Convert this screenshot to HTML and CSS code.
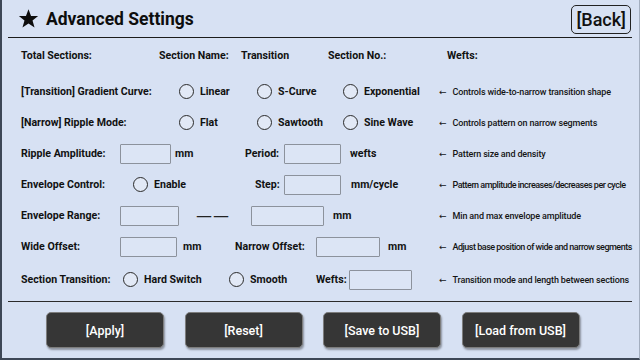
FILE: index.html
```html
<!DOCTYPE html>
<html lang="en">

<head>
  <meta charset="UTF-8">
  <meta name="viewport" content="width=device-width, initial-scale=1.0">
  <title>Advanced Settings</title>
  <link rel="stylesheet" href="styles.css">
</head>

<body>

  <div class="screen">
    <!-- Title bar -->
    <header class="topbar">
      <h1 class="title">
        <svg class="star" viewBox="0 0 24 24" aria-hidden="true">
          <polygon points="12,1.5 14.9,9 23,9.2 16.6,14.2 18.9,22.2 12,17.6 5.1,22.2 7.4,14.2 1,9.2 9.1,9"></polygon>
        </svg>
        Advanced Settings
      </h1>
      <button class="back">[Back]</button>
    </header>

    <section class="settings">
      <!-- Section summary -->
      <div class="row row-info">
        <span class="lbl">Total Sections:</span>
        <span class="lbl">Section Name:</span>
        <span class="lbl">Transition</span>
        <span class="lbl">Section No.:</span>
        <span class="lbl">Wefts:</span>
      </div>

      <div class="row row-first">
        <div class="fields f-curve">
          <span class="lbl">[Transition] Gradient Curve:</span>
          <label class="opt"><span class="radio"></span>Linear</label>
          <label class="opt"><span class="radio"></span>S-Curve</label>
          <label class="opt"><span class="radio"></span>Exponential</label>
        </div>
        <span class="note"><span class="arrow">&larr;</span>Controls wide-to-narrow transition shape</span>
      </div>

      <div class="row">
        <div class="fields f-curve">
          <span class="lbl">[Narrow] Ripple Mode:</span>
          <label class="opt"><span class="radio"></span>Flat</label>
          <label class="opt"><span class="radio"></span>Sawtooth</label>
          <label class="opt"><span class="radio"></span>Sine Wave</label>
        </div>
        <span class="note"><span class="arrow">&larr;</span>Controls pattern on narrow segments</span>
      </div>

      <div class="row">
        <div class="fields f-amp">
          <span class="lbl">Ripple Amplitude:</span>
          <input class="box w51" type="text">
          <span class="lbl">mm</span>
          <span class="lbl">Period:</span>
          <input class="box w57" type="text">
          <span class="lbl">wefts</span>
        </div>
        <span class="note"><span class="arrow">&larr;</span>Pattern size and density</span>
      </div>

      <div class="row">
        <div class="fields f-env">
          <span class="lbl">Envelope Control:</span>
          <label class="opt"><span class="radio"></span>Enable</label>
          <span class="lbl">Step:</span>
          <input class="box w57" type="text">
          <span class="lbl">mm/cycle</span>
        </div>
        <span class="note tight"><span class="arrow">&larr;</span>Pattern amplitude increases/decreases per cycle</span>
      </div>

      <div class="row">
        <div class="fields f-range">
          <span class="lbl">Envelope Range:</span>
          <input class="box w59" type="text">
          <span class="dash">——</span>
          <input class="box w73" type="text">
          <span class="lbl">mm</span>
        </div>
        <span class="note"><span class="arrow">&larr;</span>Min and max envelope amplitude</span>
      </div>

      <div class="row">
        <div class="fields f-offset">
          <span class="lbl">Wide Offset:</span>
          <input class="box w57" type="text">
          <span class="lbl">mm</span>
          <span class="lbl">Narrow Offset:</span>
          <input class="box w64" type="text">
          <span class="lbl">mm</span>
        </div>
        <span class="note tight"><span class="arrow">&larr;</span>Adjust base position of wide and narrow segments</span>
      </div>

      <div class="row row-last">
        <div class="fields f-switch">
          <span class="lbl">Section Transition:</span>
          <label class="opt"><span class="radio"></span>Hard Switch</label>
          <label class="opt"><span class="radio"></span>Smooth</label>
          <span class="lbl">Wefts:</span>
          <input class="box w63" type="text">
        </div>
        <span class="note"><span class="arrow">&larr;</span>Transition mode and length between sections</span>
      </div>
    </section>

    <!-- Action buttons -->
    <footer class="actions">
      <button class="action">[Apply]</button>
      <button class="action">[Reset]</button>
      <button class="action">[Save to USB]</button>
      <button class="action">[Load from USB]</button>
    </footer>
  </div>

</body>

</html>
```

FILE: styles.css
```css
body {
  margin: 0;
  background-color: #d7e1f3;
  font-family: Roboto, "Liberation Sans", Arial, sans-serif;
  color: #111;
}

.screen {
  width: 640px;
  height: 360px;
  box-sizing: border-box;
  padding: 0 7px 0 6px;
  border-left: 2px solid #3d4756;
  border-bottom: 2px solid #3d4756;
  border-right: 1px solid #a3aebf;
  overflow: hidden;
}

/* Title bar */
.topbar {
  height: 37px;
  display: flex;
  align-items: center;
  justify-content: space-between;
  border-bottom: 1.5px solid #1c1c1c;
  padding-left: 10px;
}

.title {
  display: flex;
  align-items: center;
  gap: 7px;
  margin: 0;
  font-size: 17.5px;
  font-weight: 700;
  color: #0d0d0d;
}

.star {
  width: 21px;
  height: 21px;
  fill: #0d0d0d;
}

.back {
  height: 29px;
  margin-right: 1px;
  margin-top: 1px;
  padding: 0 4px;
  background: transparent;
  border: 1.5px solid #222;
  border-radius: 5px;
  font-family: inherit;
  font-size: 18px;
  font-weight: 500;
  color: #111;
}

/* Rows */
.settings {
  padding: 2px 0 0 13px;
}

.row {
  height: 31px;
  display: grid;
  grid-template-columns: 418px 1fr;
  align-items: center;
}

.row-first {
  margin-top: 5px;
}

.row-last {
  margin-top: 2px;
}

.row-info {
  grid-template-columns: 138px 82px 87px 119px auto;
}

.fields {
  display: grid;
  align-items: center;
}

.f-curve {
  grid-template-columns: 158px 78px 86px auto;
}

.f-amp {
  grid-template-columns: 99px 55px 70px 39px 66px auto;
}

.f-env {
  grid-template-columns: 112px 122px 29px 67px auto;
}

.f-range {
  grid-template-columns: 99px 76px 55px 82px auto;
}

.f-offset {
  grid-template-columns: 99px 63px 52px 81px 72px auto;
}

.f-switch {
  grid-template-columns: 102px 106px 87px 33px auto;
}

.lbl,
.opt {
  font-size: 10.6px;
  font-weight: 700;
  white-space: nowrap;
}

.opt {
  display: flex;
  align-items: center;
  gap: 6px;
}

.radio {
  width: 15px;
  height: 15px;
  box-sizing: border-box;
  border: 1.3px solid #2a2a2a;
  border-radius: 50%;
  background-color: #e2e9f6;
}

.box {
  height: 20px;
  box-sizing: border-box;
  margin: 0;
  padding: 0;
  border: 1px solid #8c929c;
  border-radius: 1px;
  background-color: #dce5f5;
}

.w51 { width: 51px; }
.w57 { width: 57px; }
.w59 { width: 59px; }
.w63 { width: 63px; }
.w64 { width: 64px; }
.w73 { width: 73px; }

.dash {
  font-family: "DejaVu Sans", sans-serif;
  font-size: 16px;
  letter-spacing: 1px;
  color: #222;
}

.note {
  font-size: 9px;
  font-weight: 500;
  letter-spacing: -0.15px;
  white-space: nowrap;
  color: #151515;
}

/* long hints are squeezed to fit the edge */
.note.tight {
  letter-spacing: -0.5px;
}

.arrow {
  font-family: "DejaVu Sans", sans-serif;
  letter-spacing: 0;
  margin-right: 6px;
}

/* Action buttons */
.actions {
  margin-top: 6px;
  border-top: 1.5px solid #2b2b2b;
  padding: 10px 0 0 38px;
  display: flex;
  gap: 20.5px;
}

.action {
  width: 118px;
  height: 36px;
  background-color: #363636;
  border: 1px solid #7d7d7d;
  border-radius: 5px;
  box-shadow: 1px 2px 2px rgba(0, 0, 0, 0.35);
  font-family: inherit;
  font-size: 12.5px;
  font-weight: 500;
  color: #fff;
}
```
